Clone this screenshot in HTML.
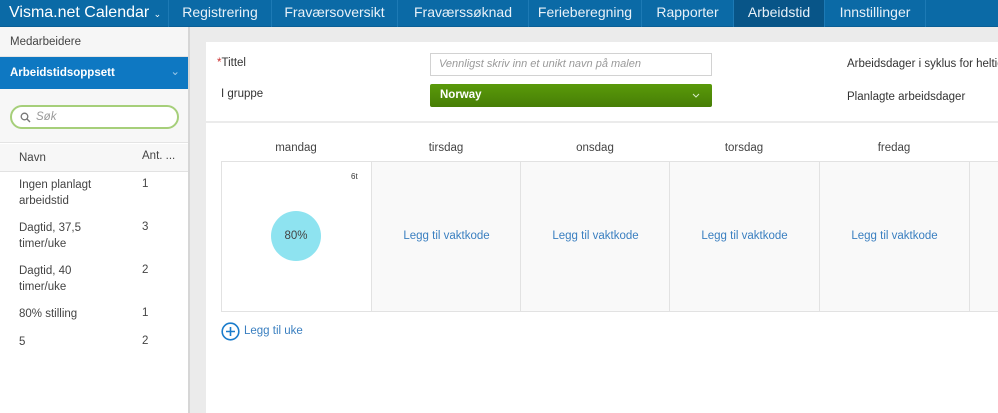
<!DOCTYPE html>
<html><head><meta charset="utf-8"><style>
*{box-sizing:border-box;margin:0;padding:0}
body{width:998px;height:413px;overflow:hidden;font-family:"Liberation Sans",sans-serif;background:#ebebeb;position:relative;font-size:12px;color:#333}
.a{position:absolute}
.nav{left:0;top:0;width:998px;height:27px;background:#0b6aa6;border-bottom:1px solid #0a5f96}
.ni{position:absolute;top:0;height:27px;color:#e8f1f8;font-size:14px;line-height:25px;text-align:center;border-left:1px solid #1d7ab5}
.side{left:0;top:27px;width:190px;height:386px;background:#fff;border-right:2px solid #d6d6d6}
.cell{position:absolute;top:161px;width:151px;height:151px;border:1px solid #e2e2e2;background:#f9f9f9;color:#3a7fc0;font-size:11.5px;text-align:center;line-height:149px}
.dh{position:absolute;top:142px;width:150px;text-align:center;font-size:11.5px;color:#444}
.row{position:absolute;left:19px;font-size:11.5px;color:#444;line-height:16px}
.cnt{position:absolute;left:142px;font-size:11.5px;color:#444}
</style></head><body>
<div class="a nav">
<div class="ni" style="left:0;width:168px;border:none;font-size:16px;text-align:left;padding-left:9px;color:#fff">Visma.net Calendar <span style="font-size:9px">&#8964;</span></div>
<div class="ni" style="left:168px;width:103px">Registrering</div>
<div class="ni" style="left:271px;width:126px">Fraværsoversikt</div>
<div class="ni" style="left:397px;width:131px">Fraværssøknad</div>
<div class="ni" style="left:528px;width:113px">Ferieberegning</div>
<div class="ni" style="left:641px;width:92px">Rapporter</div>
<div class="ni" style="left:733px;width:91px;background:#085588">Arbeidstid</div>
<div class="ni" style="left:824px;width:101px">Innstillinger</div>
<div class="ni" style="left:925px;width:73px"></div>
</div>
<div class="a side">
<div class="a" style="left:0;top:0;width:188px;height:30px;background:#f6f6f6;border-bottom:1px solid #e4e4e4;padding:9px 10px;font-size:11.5px;color:#444">Medarbeidere</div>
<div class="a" style="left:0;top:30px;width:188px;height:32px;background:#0e78c2;color:#fff;font-weight:bold;font-size:11.5px;padding:10px 10px">Arbeidstidsoppsett<span style="position:absolute;right:8px;top:7px;font-weight:normal;color:#9cc8e8">&#8964;</span></div>
<div class="a" style="left:0;top:62px;width:188px;height:54px;background:#f7f7f7;border-bottom:1px solid #e4e4e4"></div>
<div class="a" style="left:0;top:117px;width:188px;height:28px;background:#f7f7f7;border-bottom:1px solid #e2e2e2"></div>
<div class="a" style="left:10px;top:78px;width:169px;height:24px;border:2px solid #a6cf7a;border-radius:12px;background:#fff;color:#999;font-style:italic;font-size:11.5px;padding:4px 0 0 24px">Søk
<svg class="a" style="left:8px;top:5px" width="11" height="11" viewBox="0 0 11 11"><circle cx="4.5" cy="4.5" r="3.3" fill="none" stroke="#777" stroke-width="1.3"/><line x1="7" y1="7" x2="10" y2="10" stroke="#777" stroke-width="1.4"/></svg></div>
</div>
<div class="row" style="top:150px">Navn</div><div class="cnt" style="top:150px">Ant. ...</div>
<div class="row" style="top:177px">Ingen planlagt<br>arbeidstid</div><div class="cnt" style="top:178px">1</div>
<div class="row" style="top:220px">Dagtid, 37,5<br>timer/uke</div><div class="cnt" style="top:221px">3</div>
<div class="row" style="top:263px">Dagtid, 40<br>timer/uke</div><div class="cnt" style="top:264px">2</div>
<div class="row" style="top:306px">80% stilling</div><div class="cnt" style="top:307px">1</div>
<div class="row" style="top:334px">5</div><div class="cnt" style="top:335px">2</div>

<div class="a" style="left:206px;top:42px;width:792px;height:79px;background:#fff"></div>
<div class="a" style="left:206px;top:123px;width:792px;height:290px;background:#fff"></div>
<div class="a" style="left:217px;top:57px;font-size:11.5px;color:#333"><span style="color:#c33">*</span>Tittel</div>
<div class="a" style="left:221px;top:88px;font-size:11.5px;color:#333">I gruppe</div>
<div class="a" style="left:430px;top:53px;width:282px;height:23px;border:1px solid #d2d2d2;color:#999;font-style:italic;font-size:11px;padding:4px 8px">Vennligst skriv inn et unikt navn på malen</div>
<div class="a" style="left:430px;top:84px;width:282px;height:23px;background:linear-gradient(#5a9a0a,#477e06);border-radius:2px;color:#fff;font-weight:bold;font-size:11.5px;padding:5px 10px">Norway<svg style="position:absolute;right:12px;top:9px" width="8" height="5" viewBox="0 0 8 5"><path d="M1 1l3 3 3-3" fill="none" stroke="#d8eac8" stroke-width="1"/></svg></div>
<div class="a" style="left:847px;top:58px;font-size:11.5px;color:#333;white-space:nowrap">Arbeidsdager i syklus for heltid</div>
<div class="a" style="left:847px;top:91px;font-size:11.5px;color:#333">Planlagte arbeidsdager</div>

<div class="dh" style="left:221px">mandag</div>
<div class="dh" style="left:371px">tirsdag</div>
<div class="dh" style="left:520px">onsdag</div>
<div class="dh" style="left:669px">torsdag</div>
<div class="dh" style="left:819px">fredag</div>
<div class="cell" style="left:221px;background:#fff"></div>
<div class="cell" style="left:371px">Legg til vaktkode</div>
<div class="cell" style="left:520px">Legg til vaktkode</div>
<div class="cell" style="left:669px">Legg til vaktkode</div>
<div class="cell" style="left:819px">Legg til vaktkode</div>
<div class="cell" style="left:969px"></div>
<div class="a" style="left:351px;top:172px;font-size:8px;color:#333">6t</div>
<div class="a" style="left:271px;top:211px;width:50px;height:50px;border-radius:50%;background:#8ee3f0;text-align:center;line-height:50px;font-size:11.5px;color:#444">80%</div>
<svg class="a" style="left:221px;top:322px" width="19" height="19" viewBox="0 0 19 19"><circle cx="9.5" cy="9.5" r="8.3" fill="none" stroke="#1a7ccc" stroke-width="1.6"/><path d="M9.5 5v9M5 9.5h9" stroke="#1a7ccc" stroke-width="1.6"/></svg>
<div class="a" style="left:244px;top:325px;font-size:11.5px;color:#3a7fc0">Legg til uke</div>
</body></html>
